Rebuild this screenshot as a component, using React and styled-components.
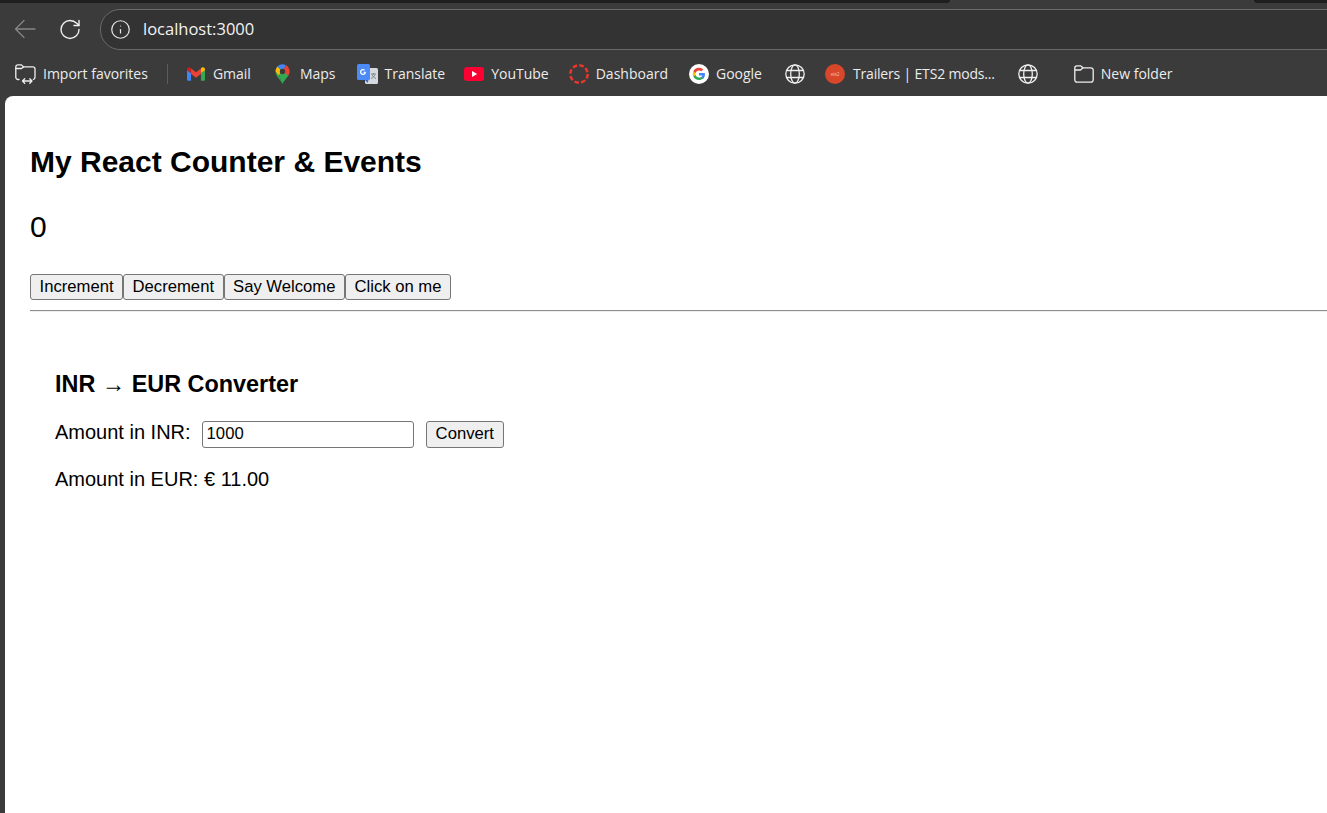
import React from "react";
import styled, { createGlobalStyle } from "styled-components";
import { RotateCw, Info } from "lucide-react";

const GlobalStyle = createGlobalStyle`
  html, body {
    margin: 0;
    padding: 0;
    height: 100%;
    overflow: hidden;
    background: #3b3b3b;
  }
  #root {
    height: 100%;
  }
`;

const BackIcon = () => (
  <svg width="22" height="20" viewBox="0 0 22 20" fill="none" stroke="#858585" strokeWidth="1.300" strokeLinecap="round" strokeLinejoin="round">
    <path d="M1.500 10H21M10 1.500L1.500 10 10 18.500" />
  </svg>
);

const ImportIcon = () => (
  <svg width="21" height="20" viewBox="0 0 21 20" fill="none" stroke="#f0f0f0" strokeWidth="1.300" strokeLinecap="round" strokeLinejoin="round">
    <path d="M4 15.500H3a2.200 2.200 0 0 1-2.200-2.200V3A2.200 2.200 0 0 1 3 .9h3.500l2 2h9.300A2.200 2.200 0 0 1 20 5v8.300a2.200 2.200 0 0 1-1.600 2.100" />
    <path d="M.9 4.500h5.600l2-1.600" />
    <path d="M7.500 17h9.500M9.700 14.800L7.500 17l2.200 2.200M14.800 14.800L17 17l-2.200 2.200" />
  </svg>
);

const GlobeIcon = () => (
  <svg width="20" height="20" viewBox="0 0 20 20" fill="none" stroke="#f0f0f0" strokeWidth="1.300">
    <circle cx="10" cy="10" r="9.200" />
    <ellipse cx="10" cy="10" rx="4.300" ry="9.200" />
    <path d="M1.800 6.500h16.400M1.800 13.500h16.400" />
  </svg>
);

const FolderIcon = () => (
  <svg width="20" height="18" viewBox="0 0 20 18" fill="none" stroke="#f0f0f0" strokeWidth="1.300" strokeLinejoin="round">
    <path d="M.8 3A2.200 2.200 0 0 1 3 .8h3.500l2.500 2h8A2.200 2.200 0 0 1 19.200 5v10a2.200 2.200 0 0 1-2.200 2.200H3A2.200 2.200 0 0 1 .8 15z" />
    <path d="M.8 5h5.700L9 2.800" />
  </svg>
);

const GmailIcon = () => (
  <svg width="18" height="14" viewBox="0 0 20 15">
    <path d="M0 3v10.500C0 14.300.7 15 1.500 15H4.500V6.500z" fill="#4285f4" />
    <path d="M20 3v10.500c0 .8-.7 1.500-1.500 1.500H15.500V6.500z" fill="#34a853" />
    <path d="M4.500 7.500V1.500L10 5.600l5.500-4.100v6L10 11.600z" fill="#ea4335" />
    <path d="M0 2.500C0 .5 2.300-.6 3.800.5L4.500 1.500v5L0 3.300z" fill="#c5221f" />
    <path d="M20 2.500c0-2-2.300-3.100-3.800-2l-.7 1v5L20 3.300z" fill="#fbbc04" />
  </svg>
);

const MapsIcon = () => (
  <svg width="15" height="20" viewBox="0 0 15 20">
    <path d="M7.500 20C6.300 16.500.5 12.500.5 7.500L3.500 10z" fill="#34a853" />
    <path d="M7.500 20c1.200-3.500 7-7.500 7-12.500L3.500 10l4 10z" fill="#34a853" />
    <path d="M.5 7.500C.5 5.500 1.300 3.700 2.500 2.500L7.500 7.500 3.500 11z" fill="#fbbc04" />
    <path d="M2.500 2.500C3.800 1.200 5.500.3 7.500.3c1.300 0 2.500.4 3.500 1L7.500 7.500z" fill="#4285f4" />
    <path d="M11 1.300C13.100 2.500 14.500 4.800 14.500 7.500c0 1.500-.6 2.800-1.200 4L7.500 7.500z" fill="#ea4335" />
    <circle cx="7.500" cy="7.500" r="2.700" fill="#3b3b3b" />
  </svg>
);

const TranslateIcon = () => (
  <svg width="21" height="20" viewBox="0 0 21 20">
    <rect x="8" y="4" width="13" height="16" rx="1.500" fill="#d5d8dc" />
    <rect x="0" y="0" width="13" height="16" rx="1.500" fill="#4c8bf5" />
    <path d="M8 16l2.500 3 1-3z" fill="#3367d6" />
    <path d="M14 10h5M16.500 9v1.500M18 10.500c-.6 2-2.400 3.500-4 4M15 10.500c.6 2 2.400 3.500 4 4" stroke="#7d8794" strokeWidth="1" fill="none" />
    <path d="M8.700 7.700H6.500v1.100h1c-.2.700-.7 1-1.400 1a1.800 1.800 0 1 1 1.100-3.200l.8-.8A3 3 0 1 0 9 8.200z" fill="#fff" />
  </svg>
);

const YouTubeIcon = () => (
  <svg width="20" height="14" viewBox="0 0 20 14">
    <rect width="20" height="14" rx="3" fill="#ff0033" />
    <path d="M8 4l5.200 3L8 10z" fill="#fff" />
  </svg>
);

const DashboardIcon = () => (
  <svg width="20" height="20" viewBox="0 0 20 20">
    <circle cx="10" cy="10" r="8.700" fill="none" stroke="#e8372c" strokeWidth="2.500" strokeDasharray="4.600 2.230" />
  </svg>
);

const GoogleIcon = () => (
  <svg width="20" height="20" viewBox="0 0 20 20">
    <circle cx="10" cy="10" r="10" fill="#fff" />
    <path d="M15.900 10.200c0-.5 0-.9-.1-1.300H10v2.500h3.300c-.1.800-.6 1.500-1.300 1.900v1.600h2.100c1.200-1.100 1.800-2.800 1.800-4.700z" fill="#4285f4" />
    <path d="M10 16c1.700 0 3.100-.6 4.100-1.500L12 12.900c-.6.400-1.300.6-2 .6-1.600 0-3-1.100-3.500-2.500H4.400v1.600C5.400 14.600 7.500 16 10 16z" fill="#34a853" />
    <path d="M6.500 11a3.500 3.500 0 0 1 0-2.100V7.300H4.400a6 6 0 0 0 0 5.300z" fill="#fbbc05" />
    <path d="M10 6.400c.9 0 1.700.3 2.300.9L14.200 5.500A6 6 0 0 0 4.400 7.300l2.100 1.600C7 7.500 8.400 6.400 10 6.400z" fill="#ea4335" />
  </svg>
);

const TrailersIcon = () => (
  <svg width="20" height="20" viewBox="0 0 20 20">
    <circle cx="10" cy="10" r="10" fill="#d9472b" />
    <text x="10" y="11.800" textAnchor="middle" fontSize="5" fontFamily="Liberation Sans" fill="#f4b3a2">
      ets2
    </text>
  </svg>
);

const bookmarks = [
  { label: "Gmail", icon: <GmailIcon />, gap: 8, after: 24 },
  { label: "Maps", icon: <MapsIcon />, gap: 10, after: 21 },
  { label: "Translate", icon: <TranslateIcon />, gap: 7, after: 19 },
  { label: "YouTube", icon: <YouTubeIcon />, gap: 7, after: 20 },
  { label: "Dashboard", icon: <DashboardIcon />, gap: 7, after: 21 },
  { label: "Google", icon: <GoogleIcon />, gap: 7, after: 23 },
  { icon: <GlobeIcon />, after: 20 },
  { label: "Trailers | ETS2 mods...", icon: <TrailersIcon />, gap: 8, after: 23, tight: true },
  { icon: <GlobeIcon />, after: 36 },
  { label: "New folder", icon: <FolderIcon />, gap: 7, after: 0 },
];

function App() {
  return (
    <Browser>
      <GlobalStyle />
      <TopStrip>
        <Tab $width={950} $side="right" />
        <Tab $width={73} $side="left" />
      </TopStrip>
      <AddressRow>
        <NavIcon $width={22} $after={22}>
          <BackIcon />
        </NavIcon>
        <NavIcon $width={24} $after={18}>
          <RotateCw size={25} strokeWidth={1.400} />
        </NavIcon>
        <AddressBar>
          <Info size={21} strokeWidth={1.400} />
          <Url>localhost:3000</Url>
        </AddressBar>
      </AddressRow>
      <BookmarkRow>
        <Bookmark $gap={7} $after={19}>
          <ImportIcon />
          <span>Import favorites</span>
        </Bookmark>
        <Divider />
        {bookmarks.map((item, i) => (
          <Bookmark key={i} $gap={item.gap} $after={item.after} $tight={item.tight}>
            {item.icon}
            {item.label && <span>{item.label}</span>}
          </Bookmark>
        ))}
      </BookmarkRow>
      <Page>
        <Heading>My React Counter &amp; Events</Heading>
        <Count>0</Count>
        <ButtonRow>
          <Button>Increment</Button>
          <Button>Decrement</Button>
          <Button>Say Welcome</Button>
          <Button>Click on me</Button>
        </ButtonRow>
        <Rule />
        <Converter>
          <SubHeading>INR → EUR Converter</SubHeading>
          <FormRow>
            <Label>Amount in INR:</Label>
            <AmountInput defaultValue="1000" />
            <ConvertButton>Convert</ConvertButton>
          </FormRow>
          <Result>Amount in EUR: € 11.00</Result>
        </Converter>
      </Page>
    </Browser>
  );
}

export default App;

const Browser = styled.div`
  display: flex;
  flex-direction: column;
  height: 813px;
  width: 1327px;
  overflow: hidden;
  background: #3b3b3b;
`;

const TopStrip = styled.div`
  display: flex;
  justify-content: space-between;
  height: 3px;
  flex-shrink: 0;
`;

const Tab = styled.div`
  height: 3px;
  width: ${(p) => p.$width}px;
  background: #1f1f1f;
  border-bottom-${(p) => p.$side}-radius: 3px;
`;

const AddressRow = styled.div`
  display: flex;
  align-items: center;
  height: 52px;
  flex-shrink: 0;
  padding-left: 14px;
`;

const NavIcon = styled.div`
  display: flex;
  align-items: center;
  justify-content: center;
  width: ${(p) => p.$width}px;
  margin-right: ${(p) => p.$after}px;
  color: #efefef;
`;

const AddressBar = styled.div`
  display: flex;
  align-items: center;
  flex: 1;
  height: 39px;
  margin-right: -40px;
  padding-left: 9px;
  gap: 12px;
  background: #333333;
  border: 1px solid #6a6a6a;
  border-radius: 20px;
  color: #e6e6e6;
`;

const Url = styled.span`
  margin-bottom: 2px;
  font-family: "Open Sans", "Liberation Sans", sans-serif;
  font-size: 16.500px;
  color: #f2f2f2;
`;

const BookmarkRow = styled.div`
  display: flex;
  align-items: center;
  height: 37px;
  padding-bottom: 4px;
  flex-shrink: 0;
  padding-left: 15px;
  color: #ececec;
`;

const Bookmark = styled.div`
  display: flex;
  align-items: center;
  gap: ${(p) => p.$gap || 0}px;
  margin-right: ${(p) => p.$after}px;
  font-family: "Open Sans", "Liberation Sans", sans-serif;
  font-size: 14px;
  letter-spacing: ${(p) => (p.$tight ? "-0.18px" : "0")};
  white-space: nowrap;
`;

const Divider = styled.div`
  width: 1px;
  height: 20px;
  background: #5c5c5c;
  margin-right: 19px;
`;

const Page = styled.main`
  flex: 1;
  margin-left: 5px;
  padding: 0 0 0 25px;
  background: #ffffff;
  border-top-left-radius: 8px;
  font-family: "Liberation Sans", Arial, sans-serif;
  color: #000000;
`;

const Heading = styled.h1`
  margin: 48px 0 0;
  font-size: 30px;
  line-height: 36px;
  font-weight: 700;
`;

const Count = styled.p`
  margin: 29px 0 0;
  font-size: 30px;
  line-height: 36px;
`;

const ButtonRow = styled.div`
  display: flex;
  margin-top: 29px;
`;

const Button = styled.button`
  height: 26px;
  padding: 0 8.500px;
  font-family: "Liberation Sans", Arial, sans-serif;
  font-size: 16.670px;
  color: #000000;
  background: #efefef;
  border: 1px solid #767676;
  border-radius: 3px;
`;

const ConvertButton = styled(Button)`
  height: 27px;
  padding: 0 9px 2px;
`;

const Rule = styled.hr`
  margin: 10px 0 0;
  border: 0;
  border-top: 1px solid #8f8f8f;
  border-bottom: 1px solid #eeeeee;
`;

const Converter = styled.section`
  padding: 58px 0 0 25px;
`;

const SubHeading = styled.h2`
  margin: 0;
  font-size: 23.400px;
  line-height: 28px;
  font-weight: 700;
`;

const FormRow = styled.div`
  display: flex;
  align-items: center;
  margin-top: 23px;
`;

const Label = styled.label`
  margin: 0 11px 5px 0;
  font-size: 20px;
  line-height: 22px;
`;

const AmountInput = styled.input`
  box-sizing: border-box;
  width: 212px;
  height: 27px;
  margin-right: 12px;
  padding: 0 4px 2px;
  font-family: "Liberation Sans", Arial, sans-serif;
  font-size: 16.670px;
  border: 1px solid #767676;
  border-radius: 3px;
`;

const Result = styled.p`
  margin: 19px 0 0;
  font-size: 20px;
  line-height: 24px;
`;
